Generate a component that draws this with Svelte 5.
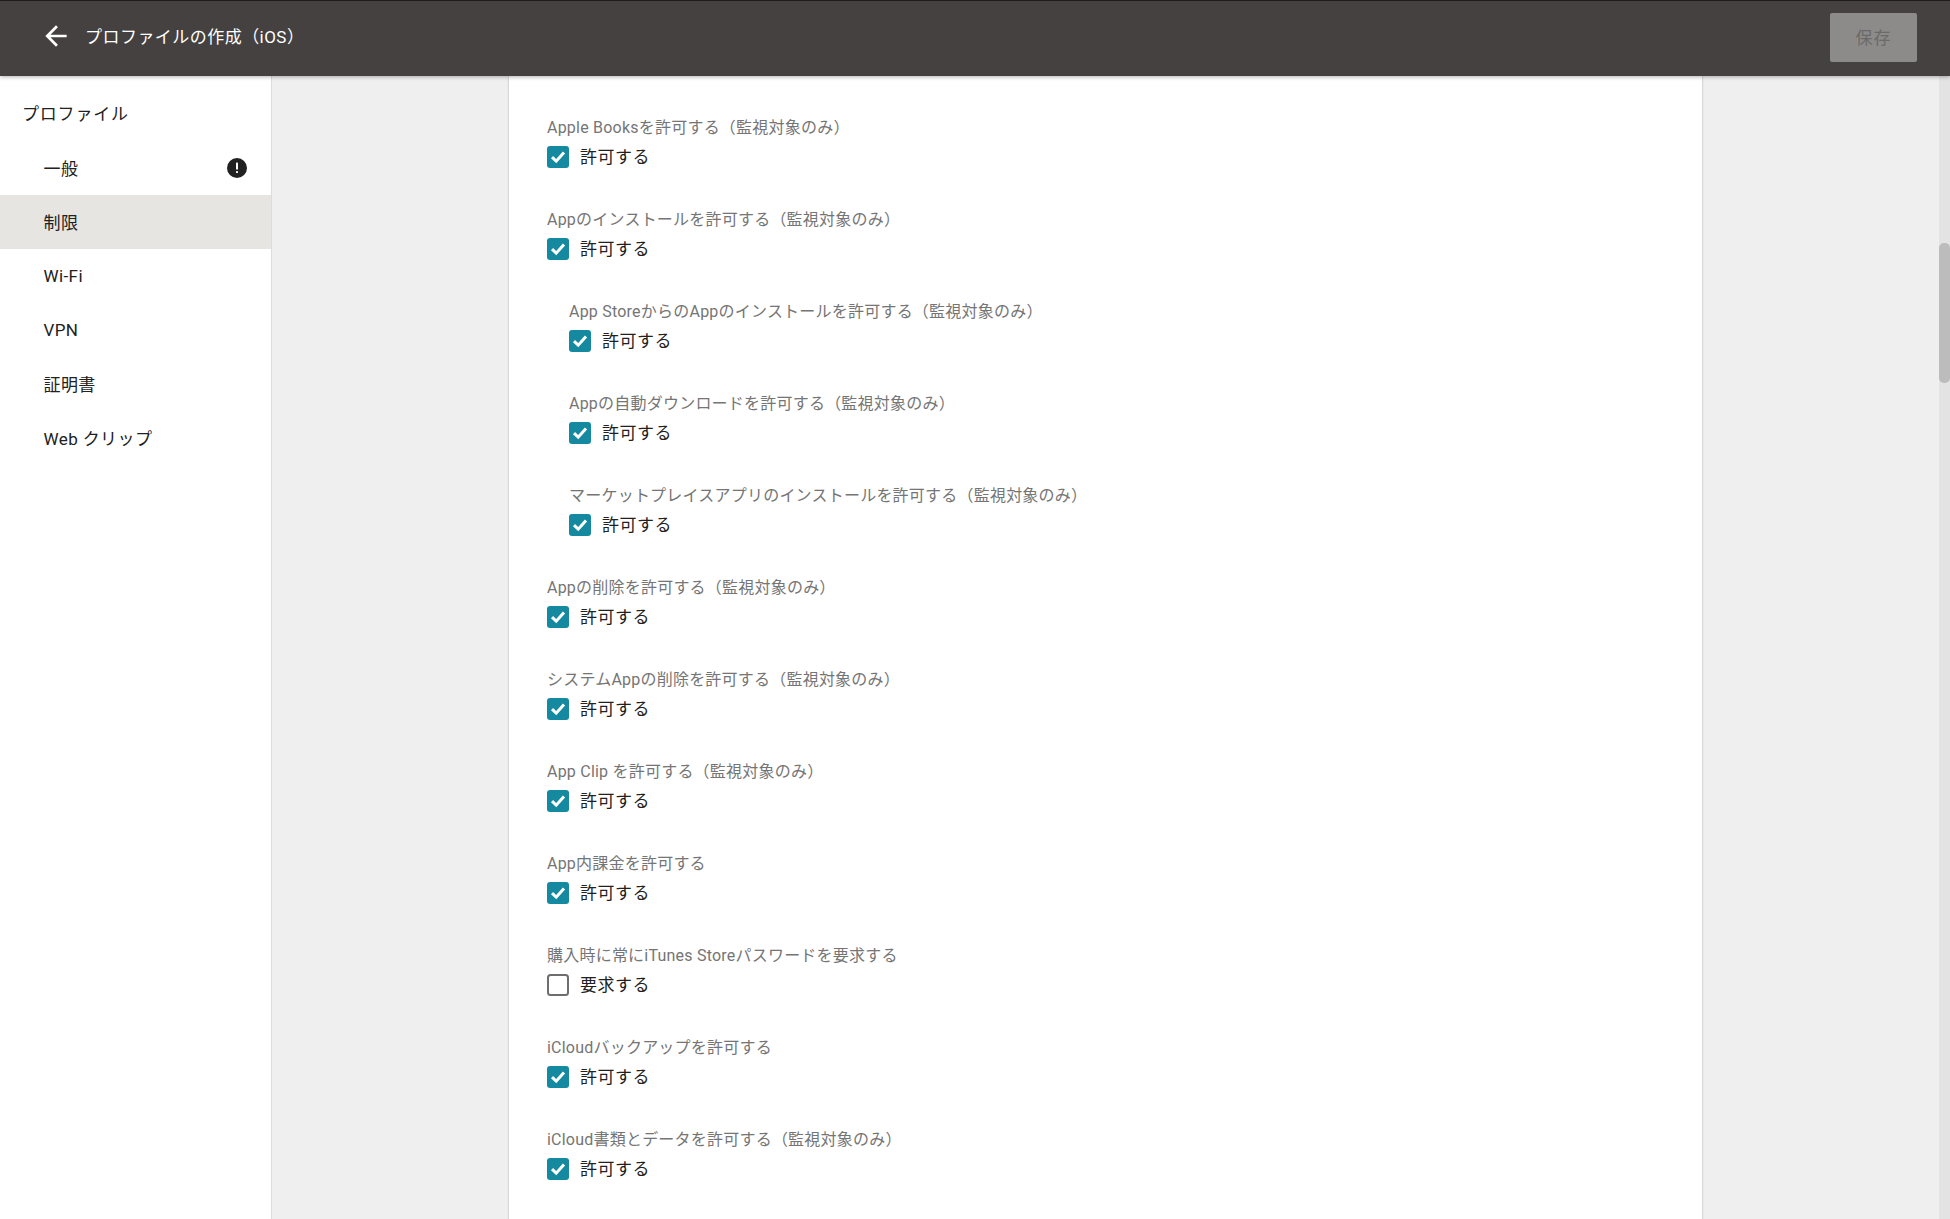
<script>
	const menu = [
		{ name: '一般', alert: true },
		{ name: '制限', active: true },
		{ name: 'Wi-Fi' },
		{ name: 'VPN' },
		{ name: '証明書' },
		{ name: 'Web クリップ' }
	];

	const allow = '許可する';
	const rows = [
		{ label: 'Apple Booksを許可する（監視対象のみ）', text: allow, checked: true },
		{ label: 'Appのインストールを許可する（監視対象のみ）', text: allow, checked: true },
		{ label: 'App StoreからのAppのインストールを許可する（監視対象のみ）', text: allow, checked: true, nested: true },
		{ label: 'Appの自動ダウンロードを許可する（監視対象のみ）', text: allow, checked: true, nested: true },
		{ label: 'マーケットプレイスアプリのインストールを許可する（監視対象のみ）', text: allow, checked: true, nested: true },
		{ label: 'Appの削除を許可する（監視対象のみ）', text: allow, checked: true },
		{ label: 'システムAppの削除を許可する（監視対象のみ）', text: allow, checked: true },
		{ label: 'App Clip を許可する（監視対象のみ）', text: allow, checked: true },
		{ label: 'App内課金を許可する', text: allow, checked: true },
		{ label: '購入時に常にiTunes Storeパスワードを要求する', text: '要求する', checked: false },
		{ label: 'iCloudバックアップを許可する', text: allow, checked: true },
		{ label: 'iCloud書類とデータを許可する（監視対象のみ）', text: allow, checked: true }
	];
</script>

<div class="page">
	<header class="topbar">
		<button class="back" aria-label="戻る">
			<svg width="32" height="32" viewBox="0 0 24 24">
				<path d="M20 11H7.83l5.59-5.59L12 4l-8 8 8 8 1.41-1.41L7.83 13H20v-2z" fill="#fff" />
			</svg>
		</button>
		<h1>プロファイルの作成（iOS）</h1>
		<button class="save" disabled>保存</button>
	</header>

	<div class="body">
		<nav class="side">
			<div class="side-title">プロファイル</div>
			{#each menu as item}
				<div class="side-item" class:active={item.active}>
					<span>{item.name}</span>
					{#if item.alert}
						<svg width="20" height="20" viewBox="0 0 20 20">
							<circle cx="10" cy="10" r="10" fill="#212121" />
							<rect x="9" y="4.6" width="2" height="7" rx="0.6" fill="#fff" />
							<rect x="9" y="13" width="2" height="2" rx="0.4" fill="#fff" />
						</svg>
					{/if}
				</div>
			{/each}
		</nav>

		<main class="content">
			<section class="card">
				{#each rows as row}
					<div class="row" class:nested={row.nested}>
						<div class="label">{row.label}</div>
						<label class="check">
							{#if row.checked}
								<svg class="box" width="22" height="22" viewBox="0 0 22 22">
									<rect width="22" height="22" rx="3" fill="#14899f" />
									<path d="M5 11.2l4.2 4 7.8-8.6" fill="none" stroke="#fff" stroke-width="3" />
								</svg>
							{:else}
								<svg class="box" width="22" height="22" viewBox="0 0 22 22">
									<rect x="1" y="1" width="20" height="20" rx="2.5" fill="#fff" stroke="#6e6e6e" stroke-width="2" />
								</svg>
							{/if}
							<span>{row.text}</span>
						</label>
					</div>
				{/each}
			</section>
		</main>

		<div class="scrollbar">
			<div class="thumb"></div>
		</div>
	</div>
</div>

<style>
	:global(body) {
		overflow: hidden;
	}

	.page {
		height: 1219px;
		display: flex;
		flex-direction: column;
		overflow: hidden;
		font-family: Roboto, 'Noto Sans CJK JP', sans-serif;
		color: #212121;
	}

	.topbar {
		height: 76px;
		flex: none;
		box-sizing: border-box;
		border-top: 1px solid #1c1c1c;
		background: #444140;
		display: flex;
		align-items: center;
		padding: 0 33px 5px 40px;
		position: relative;
		z-index: 2;
		box-shadow: 0 1px 4px rgba(0, 0, 0, 0.3);
	}

	.back {
		width: 32px;
		height: 32px;
		padding: 0;
		border: none;
		background: none;
		display: flex;
	}

	h1 {
		margin: 0 0 2px 13px;
		font-size: 17px;
		font-weight: 400;
		color: #fff;
		letter-spacing: 0.46px;
	}

	.save {
		margin-left: auto;
		width: 87px;
		height: 49px;
		margin-top: 3px;
		padding: 0 0 2px;
		border: none;
		border-radius: 2px;
		background: #8c8b8a;
		color: #6b6a69;
		font-family: inherit;
		font-size: 17px;
		letter-spacing: 1px;
	}

	.body {
		flex: 1;
		display: flex;
		min-height: 0;
	}

	.side {
		width: 272px;
		flex: none;
		box-sizing: border-box;
		background: #fff;
		border-right: 1px solid #dcdcdc;
	}

	.side-title {
		height: 38px;
		padding: 27px 0 0 22px;
		font-size: 17px;
		line-height: 22px;
		letter-spacing: 0.8px;
	}

	.side-item {
		height: 54px;
		box-sizing: border-box;
		display: flex;
		align-items: center;
		justify-content: space-between;
		padding: 0 24px 1px 43.5px;
		font-size: 17px;
		letter-spacing: 0.4px;
	}

	.side-item.active {
		background: #e6e5e1;
	}

	.content {
		flex: 1;
		min-width: 0;
		background: #efefef;
		display: flex;
		justify-content: center;
		overflow: hidden;
	}

	.card {
		width: 1193px;
		height: fit-content;
		box-sizing: border-box;
		background: #fff;
		padding: 41px 38px 0;
		box-shadow: 0 0 2px rgba(0, 0, 0, 0.3);
	}

	.row {
		height: 92px;
	}

	.row.nested {
		padding-left: 22px;
	}

	.label {
		font-size: 16px;
		line-height: 22px;
		color: #757575;
		letter-spacing: 0.22px;
		white-space: nowrap;
	}

	.check {
		margin-top: 7px;
		display: flex;
		align-items: center;
		gap: 11px;
		font-size: 17px;
		line-height: 22px;
		color: #212121;
		letter-spacing: 0.5px;
	}

	.box {
		flex: none;
	}

	.scrollbar {
		width: 11px;
		flex: none;
		background: #e3e3e3;
		padding-top: 167px;
		box-sizing: border-box;
	}

	.thumb {
		height: 140px;
		border-radius: 5px;
		background: #bcbcbc;
	}
</style>
